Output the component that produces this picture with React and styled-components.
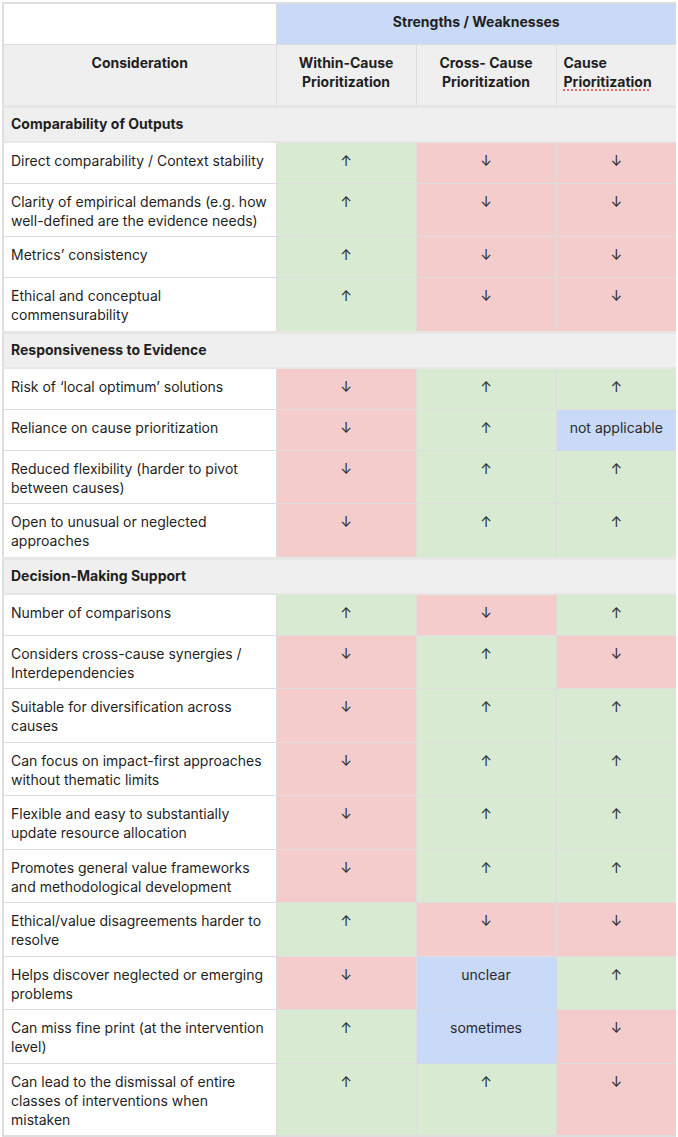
import React from 'react';
import styled, { createGlobalStyle } from 'styled-components';

const GlobalStyle = createGlobalStyle`
  body {
    margin: 2px;
    background: #ffffff;
    font-family: Inter, "Liberation Sans", Arial, sans-serif;
    color: #1f1f1f;
  }
`;

const tones = {
  up: '#d9ead3',
  down: '#f4cccc',
  info: '#c9daf8',
  head: '#efefef',
  blank: '#ffffff',
};

const Table = styled.table`
  border-collapse: collapse;
  table-layout: fixed;
  width: 674px;
  font-size: 14px;
  line-height: 19px;
  border: 2px solid #dedede;
`;

const HeadCell = styled.th`
  background: ${(p) => tones[p.$tone || 'head']};
  border: 1px solid #dcdcdc;
  padding: 8px 7px 8px;
  height: ${(p) => p.$height || 24}px;
  font-weight: 700;
  text-align: ${(p) => (p.$left ? 'left' : 'center')};
  vertical-align: top;
  box-sizing: border-box;
`;

const Squiggle = styled.span`
  text-decoration: underline dotted #e06666;
  text-decoration-thickness: 2px;
  text-underline-offset: 3px;
`;

const SectionCell = styled.td`
  background: #efefef;
  border: 1px solid #dcdcdc;
  border-top: 3px solid #e6e6e4;
  border-bottom: 2px solid #e6e6e4;
  padding: 6.5px 7px 7.5px;
  font-weight: 700;
  text-align: left;
`;

const LabelCell = styled.td`
  background: #ffffff;
  border: 1px solid #dcdcdc;
  padding: 8px 7px 6.5px;
  height: 25.5px;
  vertical-align: top;
  text-align: left;
`;

const MarkCell = styled.td`
  background: ${(p) => tones[p.$tone]};
  border: 1px solid ${(p) => (p.$tone === 'info' ? '#d0d8e6' : '#dedede')};
  padding: 8px 7px 6.5px;
  vertical-align: top;
  text-align: center;
  color: #2a2a2a;
`;

const MarkText = styled.div`
  height: 19px;
  line-height: 19px;
  overflow: visible;
`;

const sections = [
  {
    title: 'Comparability of Outputs',
    rows: [
      ['Direct comparability / Context stability', 'up', 'down', 'down'],
      ['Clarity of empirical demands (e.g. how well-defined are the evidence needs)', 'up', 'down', 'down'],
      ['Metrics’ consistency', 'up', 'down', 'down'],
      ['Ethical and conceptual commensurability', 'up', 'down', 'down'],
    ],
  },
  {
    title: 'Responsiveness to Evidence',
    rows: [
      ['Risk of ‘local optimum’ solutions', 'down', 'up', 'up'],
      ['Reliance on cause prioritization', 'down', 'up', 'not applicable'],
      ['Reduced flexibility (harder to pivot between causes)', 'down', 'up', 'up'],
      ['Open to unusual or neglected approaches', 'down', 'up', 'up'],
    ],
  },
  {
    title: 'Decision-Making Support',
    rows: [
      ['Number of comparisons', 'up', 'down', 'up'],
      ['Considers cross-cause synergies / Interdependencies', 'down', 'up', 'down'],
      ['Suitable for diversification across causes', 'down', 'up', 'up'],
      ['Can focus on impact-first approaches without thematic limits', 'down', 'up', 'up'],
      ['Flexible and easy to substantially update resource allocation', 'down', 'up', 'up'],
      ['Promotes general value frameworks and methodological development', 'down', 'up', 'up'],
      ['Ethical/value disagreements harder to resolve', 'up', 'down', 'down'],
      ['Helps discover neglected or emerging problems', 'down', 'unclear', 'up'],
      ['Can miss fine print (at the intervention level)', 'up', 'sometimes', 'down'],
      ['Can lead to the dismissal of entire classes of interventions when mistaken', 'up', 'up', 'down'],
    ],
  },
];

const Mark = ({ value }) => {
  const tone = value === 'up' || value === 'down' ? value : 'info';
  const text = value === 'up' ? '↑' : value === 'down' ? '↓' : value;
  return (
    <MarkCell $tone={tone}>
      <MarkText>{text}</MarkText>
    </MarkCell>
  );
};

const App = () => (
  <>
    <GlobalStyle />
    <Table>
      <colgroup>
        <col style={{ width: 273 }} />
        <col style={{ width: 140 }} />
        <col style={{ width: 140 }} />
        <col style={{ width: 121 }} />
      </colgroup>
      <thead>
        <tr>
          <HeadCell $tone="blank" $height={41} />
          <HeadCell $tone="info" colSpan={3} $height={41}>Strengths / Weaknesses</HeadCell>
        </tr>
        <tr>
          <HeadCell $height={62}>Consideration</HeadCell>
          <HeadCell $height={62}>Within-Cause Prioritization</HeadCell>
          <HeadCell $height={62}>Cross- Cause Prioritization</HeadCell>
          <HeadCell $height={62} $left>
            Cause <Squiggle>Prioritization</Squiggle>
          </HeadCell>
        </tr>
      </thead>
      <tbody>
        {sections.map((section) => (
          <React.Fragment key={section.title}>
            <tr>
              <SectionCell colSpan={4}>{section.title}</SectionCell>
            </tr>
            {section.rows.map(([label, a, b, c]) => (
              <tr key={label}>
                <LabelCell>{label}</LabelCell>
                <Mark value={a} />
                <Mark value={b} />
                <Mark value={c} />
              </tr>
            ))}
          </React.Fragment>
        ))}
      </tbody>
    </Table>
  </>
);

export default App;
